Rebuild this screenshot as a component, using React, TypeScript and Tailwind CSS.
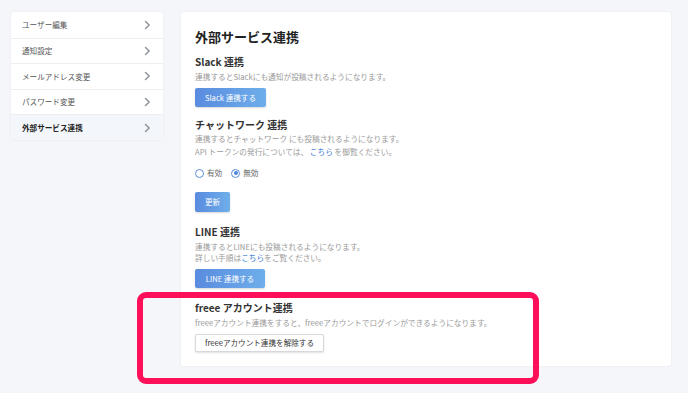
import React from "react";

const font = { fontFamily: '"Noto Sans CJK JP", "Noto Sans", sans-serif' };

function Chevron() {
  return (
    <svg width="7" height="10" viewBox="0 0 7 10" fill="none">
      <path d="M1.5 1.5 L5.2 5 L1.5 8.5" stroke="#8a8f98" strokeWidth="1.4" strokeLinecap="round" strokeLinejoin="round" />
    </svg>
  );
}

const items = ["ユーザー編集", "通知設定", "メールアドレス変更", "パスワード変更", "外部サービス連携"];

function BlueButton({ children, className = "" }: { children: React.ReactNode; className?: string }) {
  return (
    <div
      className={`flex items-center justify-center rounded-[2px] bg-gradient-to-r from-[#5a8bdf] to-[#6eaeea] text-[7.6px] text-white shadow-[0_1px_2px_rgba(0,0,0,0.15)] ${className}`}
    >
      {children}
    </div>
  );
}

export default function App() {
  return (
    <div className="relative h-[393px] w-[688px] overflow-hidden bg-[#f5f6fa]" style={font}>
      <div className="flex items-start pl-[11px] pt-[12px]">
        {/* Sidebar */}
        <div className="w-[152px] overflow-hidden rounded-[3px] bg-[#eef0f4] shadow-[0_0_2px_rgba(0,0,0,0.08)]">
          {items.map((t, i) => (
            <div
              key={t}
              className={`flex h-[25.6px] items-center justify-between pl-[11px] pr-[12px] ${
                i === 4 ? "bg-[#f3f6fb] font-bold text-[#222]" : "bg-white text-[#555]"
              } ${i > 0 ? "border-t border-[#eceef2]" : ""}`}
            >
              <span className="text-[7.6px] leading-none">{t}</span>
              <Chevron />
            </div>
          ))}
        </div>

        {/* Main card */}
        <div className="ml-[18px] h-[354px] w-[490px] rounded-[3px] bg-white pl-[14px] pt-[16px] shadow-[0_0_2px_rgba(0,0,0,0.08)]">
          <div className="text-[13px] font-bold leading-[18px] text-[#222]">外部サービス連携</div>

          <div className="mt-[9px] text-[10px] font-bold leading-[14px] text-[#333]">Slack 連携</div>
          <div className="mt-[2px] text-[7.7px] leading-[12px] text-[#9a9a9a]">連携するとSlackにも通知が投稿されるようになります。</div>
          <BlueButton className="mt-[5px] h-[19px] w-[71px]">Slack 連携する</BlueButton>

          <div className="mt-[11px] text-[10px] font-bold leading-[14px] text-[#333]">チャットワーク 連携</div>
          <div className="text-[7.7px] leading-[13px] text-[#9a9a9a]">
            <div>連携するとチャットワーク にも投稿されるようになります。</div>
            <div>
              API トークンの発行については、 <span className="text-[#3b7dd8]">こちら</span> を御覧ください。
            </div>
          </div>
          <div className="mt-[9px] flex h-[12px] items-center text-[7.6px] text-[#666]">
            <span className="inline-block h-[9px] w-[9px] rounded-full border border-[#5b8fde] bg-white" />
            <span className="ml-[3px]">有効</span>
            <span className="ml-[9px] flex h-[9px] w-[9px] items-center justify-center rounded-full border border-[#5b8fde] bg-white">
              <span className="h-[4px] w-[4px] rounded-full bg-[#4a86dc]" />
            </span>
            <span className="ml-[3px]">無効</span>
          </div>
          <BlueButton className="mt-[13px] h-[20px] w-[35px]">更新</BlueButton>

          <div className="mt-[13px] text-[10px] font-bold leading-[14px] text-[#333]">LINE 連携</div>
          <div className="mt-[2px] text-[7.7px] leading-[11px] text-[#9a9a9a]">
            <div>連携するとLINEにも投稿されるようになります。</div>
            <div>
              詳しい手順は<span className="text-[#3b7dd8]">こちら</span>をご覧ください。
            </div>
          </div>
          <BlueButton className="mt-[6px] h-[19px] w-[70px]">LINE 連携する</BlueButton>

          <div className="mt-[13px] text-[10px] font-bold leading-[14px] text-[#333]">freee アカウント連携</div>
          <div className="mt-[2px] text-[7.7px] leading-[12px] text-[#9a9a9a]">
            freeeアカウント連携をすると、freeeアカウントでログインができるようになります。
          </div>
          <div className="mt-[5px] flex h-[18px] w-[129px] items-center justify-center rounded-[2px] border border-[#d6d8dc] bg-white text-[7.6px] text-[#333] shadow-[0_1px_2px_rgba(0,0,0,0.12)]">
            freeeアカウント連携を解除する
          </div>
        </div>
      </div>

      {/* Annotation highlight */}
      <div className="pointer-events-none absolute left-[137px] top-[292px] h-[92px] w-[402px] rounded-[9px] border-[6px] border-[#fe0f5a]" />
    </div>
  );
}
